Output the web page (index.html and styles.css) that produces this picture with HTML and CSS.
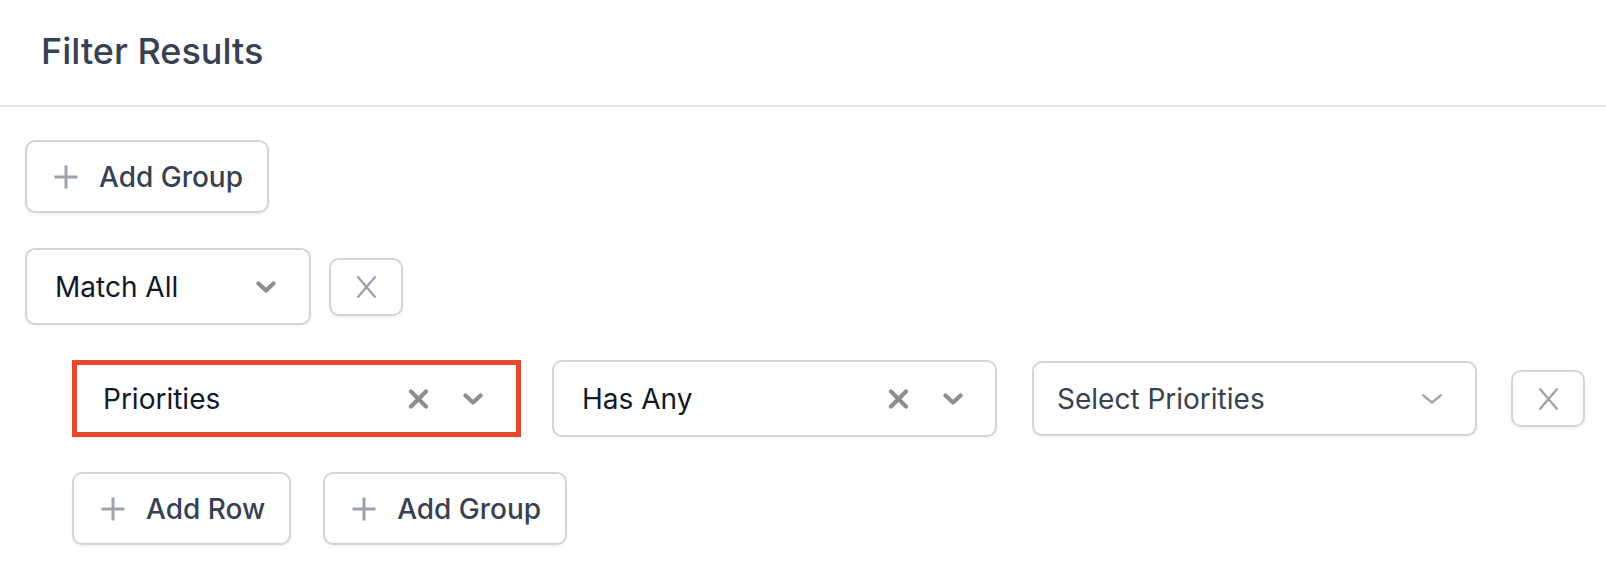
FILE: index.html
```html
<!DOCTYPE html>
<html lang="en">
<head>
<meta charset="utf-8">
<title>Filter Results</title>
<link rel="stylesheet" href="styles.css">
</head>
<body>
<header class="header">
  <h1 class="title">Filter Results</h1>
</header>
<main class="content">
  <button class="btn" type="button">
    <svg class="plus" width="26" height="26" viewBox="0 0 26 26"><path d="M13 1.5v23M1.5 13h23"/></svg>
    <span>Add Group</span>
  </button>

  <section class="group">
    <div class="group-head">
      <div class="select select-match">
        <span class="value">Match All</span>
        <svg class="chev-bold" width="20" height="12" viewBox="0 0 20 12"><polyline points="2.5,2.5 10,9.5 17.5,2.5"/></svg>
      </div>
      <button class="icon-btn" type="button" aria-label="Remove group">
        <svg class="x-thin" width="19" height="22" viewBox="0 0 19 22"><path d="M1.2 1.2L17.8 20.8M17.8 1.2L1.2 20.8"/></svg>
      </button>
    </div>

    <div class="group-body">
      <div class="row">
        <div class="select select-field is-focused">
          <span class="value">Priorities</span>
          <svg class="x-bold" width="21" height="20" viewBox="0 0 21 20"><path d="M3 2.5L18 17.5M18 2.5L3 17.5"/></svg>
          <svg class="chev-bold" width="20" height="12" viewBox="0 0 20 12"><polyline points="2.5,2.5 10,9.5 17.5,2.5"/></svg>
        </div>
        <div class="select select-op">
          <span class="value">Has Any</span>
          <svg class="x-bold" width="21" height="20" viewBox="0 0 21 20"><path d="M3 2.5L18 17.5M18 2.5L3 17.5"/></svg>
          <svg class="chev-bold" width="20" height="12" viewBox="0 0 20 12"><polyline points="2.5,2.5 10,9.5 17.5,2.5"/></svg>
        </div>
        <div class="select select-values">
          <span class="value placeholder">Select Priorities</span>
          <svg class="chev-thin" width="20" height="10" viewBox="0 0 20 10"><polyline points="1.3,1.3 10,8.7 18.7,1.3"/></svg>
        </div>
        <button class="icon-btn icon-btn-row" type="button" aria-label="Remove row">
          <svg class="x-thin" width="19" height="22" viewBox="0 0 19 22"><path d="M1.2 1.2L17.8 20.8M17.8 1.2L1.2 20.8"/></svg>
        </button>
      </div>

      <div class="actions">
        <button class="btn" type="button">
          <svg class="plus" width="26" height="26" viewBox="0 0 26 26"><path d="M13 1.5v23M1.5 13h23"/></svg>
          <span>Add Row</span>
        </button>
        <button class="btn" type="button">
          <svg class="plus" width="26" height="26" viewBox="0 0 26 26"><path d="M13 1.5v23M1.5 13h23"/></svg>
          <span>Add Group</span>
        </button>
      </div>
    </div>
  </section>
</main>
</body>
</html>
```

FILE: styles.css
```css
* { box-sizing: border-box; }

html, body {
  margin: 0;
  padding: 0;
  background: #ffffff;
  font-family: Inter, "Noto Sans", "Liberation Sans", sans-serif;
}

.header {
  padding: 29px 41px 32px;
  border-bottom: 2px solid #e5e7eb;
}

.title {
  margin: 0;
  font-size: 36px;
  line-height: 44px;
  font-weight: 500;
  color: #374151;
}

.content {
  padding: 33px 25px;
  display: flex;
  flex-direction: column;
  align-items: flex-start;
  gap: 35px;
}

.btn {
  display: inline-flex;
  align-items: center;
  gap: 20px;
  height: 73px;
  padding: 0 24px 0 26px;
  border: 2px solid #d1d5db;
  border-radius: 10px;
  background: #ffffff;
  box-shadow: 0 2px 3px rgba(0, 0, 0, 0.05);
  font-family: inherit;
  font-size: 28px;
  font-weight: 500;
  color: #374151;
  cursor: pointer;
}

.plus path {
  fill: none;
  stroke: #9ca3af;
  stroke-width: 3;
}

.group {
  display: flex;
  flex-direction: column;
  gap: 35px;
}

.group-head {
  display: flex;
  align-items: center;
  gap: 18px;
}

.select {
  display: flex;
  align-items: center;
  height: 77px;
  border: 2px solid #d1d5db;
  border-radius: 10px;
  background: #ffffff;
  box-shadow: 0 2px 3px rgba(0, 0, 0, 0.04);
  font-size: 28px;
  font-weight: 400;
  color: #111827;
}

.select .value {
  flex: 1;
  white-space: nowrap;
}

.select .placeholder {
  color: #374151;
}

.select-match {
  width: 286px;
  padding: 0 33px 0 28px;
}

.group-body {
  padding-left: 47px;
  display: flex;
  flex-direction: column;
  gap: 35px;
}

.row {
  display: flex;
  align-items: center;
}

.select-field {
  width: 449px;
  padding: 0 33px 0 26px;
  gap: 34px;
}

.select-field.is-focused {
  border: 5px solid #e8472b;
  border-radius: 0;
}

.select-op {
  width: 445px;
  margin-left: 31px;
  padding: 0 32px 0 28px;
  gap: 34px;
}

.select-values {
  width: 445px;
  height: 75px;
  margin-left: 35px;
  padding: 0 33px 0 23px;
}

.x-bold path {
  fill: none;
  stroke: #8e8e8e;
  stroke-width: 4.2;
  stroke-linecap: round;
}

.chev-bold polyline {
  fill: none;
  stroke: #8e8e8e;
  stroke-width: 4.2;
  stroke-linecap: round;
  stroke-linejoin: round;
}

.chev-thin polyline {
  fill: none;
  stroke: #9ca3af;
  stroke-width: 2.4;
  stroke-linecap: round;
  stroke-linejoin: round;
}

.icon-btn {
  display: flex;
  align-items: center;
  justify-content: center;
  width: 74px;
  height: 58px;
  padding: 0;
  border: 2px solid #d1d5db;
  border-radius: 10px;
  background: #ffffff;
  box-shadow: 0 2px 3px rgba(0, 0, 0, 0.05);
  cursor: pointer;
}

.icon-btn-row {
  height: 57px;
  margin-left: 34px;
}

.x-thin path {
  fill: none;
  stroke: #9ca3af;
  stroke-width: 2.3;
  stroke-linecap: round;
}

.actions {
  display: flex;
  gap: 32px;
}
```
